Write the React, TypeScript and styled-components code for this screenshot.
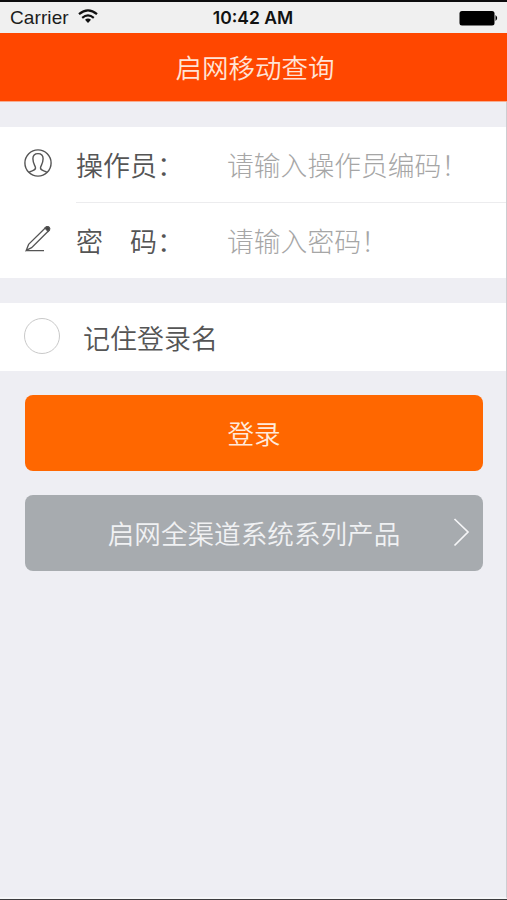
import React from 'react';
import styled, { createGlobalStyle } from 'styled-components';

const Global = createGlobalStyle`
  * { box-sizing: border-box; }
  body { margin: 0; background: #eeeef3; }
  button { font: inherit; }
`;
const Screen = styled.div`
  width: 507px; height: 900px; overflow: hidden;
  display: flex; flex-direction: column;
  background: #eeeef3;
  border-top: 2px solid #0c0c0e; border-bottom: 1px solid #3c3c3e;
  font-family: "Noto Sans CJK SC", sans-serif; font-weight: 350;
  color: #555;
`;
const Body = styled.div`
  flex: 1; display: flex; flex-direction: column;
  border-right: 1px solid #cdcdd1; border-bottom: 2px solid #f6f6f8;
`;
const StatusBar = styled.div`
  height: 31px; flex: none; background: #f0f0f0; color: #1c1c1c;
  display: grid; grid-template-columns: 1fr auto 1fr; align-items: center;
  padding: 0 9px 0 10px;
  font: 400 19px/31px "Liberation Sans", sans-serif;
`;
const Carrier = styled.span`
  display: flex; align-items: center; gap: 9px; letter-spacing: 0.1px;
`;
const WifiIcon = styled.svg`margin-top: -2px;`;
const Time = styled.span`
  font: 600 17.5px/31px Inter, sans-serif;
  margin-right: 2px; color: #111;
`;
const Battery = styled.span`justify-self: end; display: flex;`;
const NavBar = styled.header`
  height: 69px; flex: none; background: #ff4700; color: #ffe3d6;
  display: flex; align-items: center; justify-content: center;
  padding-left: 3px; font-size: 26.5px; line-height: 68px;
  border-bottom: 1px solid #f7ad91; margin-right: -1px;
`;
const Card = styled.section`
  margin-top: 25px; background: #fff; flex: none;
`;
const Field = styled.label`
  height: 75px; display: flex; align-items: center; padding-left: 24px;
`;
const Icon = styled.span`width: 52px; display: flex; margin-top: -3px;`;
const Label = styled.span`width: 151px; font-size: 27px; white-space: pre;`;
const Hint = styled.span`font-size: 26.8px; font-weight: 300; color: #a6a6a6;`;
const Divider = styled.div`height: 1px; background: #ececee; margin-left: 76px;`;
const Remember = styled.div`
  height: 68px; display: flex; align-items: center;
  padding-left: 24px; gap: 24px; font-size: 27px;
`;
const Radio = styled.span`
  width: 36px; height: 36px; margin: -3px -1px 0 0;
  border-radius: 50%; border: 1.5px solid #c9c9c9;
`;
const Button = styled.button<{ $tone: string; $ink: string }>`
  margin: 24px 23px 0 25px; height: 76px; flex: none;
  border: 0; border-radius: 8px; background: ${p => p.$tone}; color: ${p => p.$ink};
  display: grid; grid-template-columns: 20px 1fr 20px; align-items: center; padding: 0 12px;
  font-size: 26.6px; line-height: 40px;
`;
const Caption = styled.span`
  grid-column: 2; white-space: nowrap;
`;
const Chevron = styled.svg`margin-top: -3px;`;

export default function App() {
  return (
    <><Global /><Screen>
      <StatusBar>
        <Carrier>Carrier
          <WifiIcon width="20" height="15" viewBox="0 0 20 15" fill="none" stroke="#111" strokeWidth="2.2">
            <path d="M1 5.2Q10-2.6 19 5.2M4.2 8.8Q10 4 15.8 8.8" />
            <path d="M10 14l-3-3.2q3-2.4 6 0z" fill="#111" stroke="none" />
          </WifiIcon>
        </Carrier>
        <Time>10:42 AM</Time>
        <Battery>
          <svg width="39" height="16">
            <rect x="0.5" y="1" width="35" height="14.5" rx="2.5" fill="#000" />
            <path d="M36.5 5q3.4 3 0 6z" />
          </svg>
        </Battery>
      </StatusBar>
      <Body>
        <NavBar>启网移动查询</NavBar>
        <Card>
          <Field>
            <Icon>
              <svg width="28" height="28" viewBox="0 0 28 28" fill="none" stroke="#555" strokeWidth="1.4">
                <circle cx="14" cy="14" r="13.1" />
                <path d="M5 23.4C7.5 21.4 11.8 22 11.5 18.8C11.3 16.8 8.9 14.5 8.9 9.8C8.9 6.2 10.5 4.6 14 4.6S19.1 6.2 19.1 9.8C19.1 14.5 16.7 16.8 16.5 18.8C16.2 22 20.5 21.4 23 23.4" />
              </svg>
            </Icon>
            <Label>操作员：</Label><Hint>请输入操作员编码！</Hint>
          </Field>
          <Divider />
          <Field>
            <Icon>
              <svg width="28" height="28" viewBox="0 0 28 28" fill="none" stroke="#555" strokeWidth="1.3">
                <path d="M2 25.6h18M2.2 25.4L4.6 19.4L22 2.2q1.6-1.1 2.9.2t.2 2.9L7.6 22.6z" />
                <path d="M21 3.1l1.6-1.4q1.3-.5 2.4.6t.5 2.5l-1.4 1.5z" fill="#444" />
              </svg>
            </Icon>
            <Label>密　码：</Label><Hint>请输入密码！</Hint>
          </Field>
        </Card>
        <Card><Remember><Radio />记住登录名</Remember></Card>
        <Button $tone="#ff6700" $ink="#ffeadb"><Caption>登录</Caption></Button>
        <Button $tone="#a7abaf" $ink="#f0f1f3">
          <Caption>启网全渠道系统系列产品</Caption>
          <Chevron width="20" height="30" fill="none" stroke="#f5f5f7" strokeWidth="1.7">
            <path d="M3.5 2l13.5 13L3.5 28.5" />
          </Chevron>
        </Button>
      </Body>
    </Screen></>
  );
}
